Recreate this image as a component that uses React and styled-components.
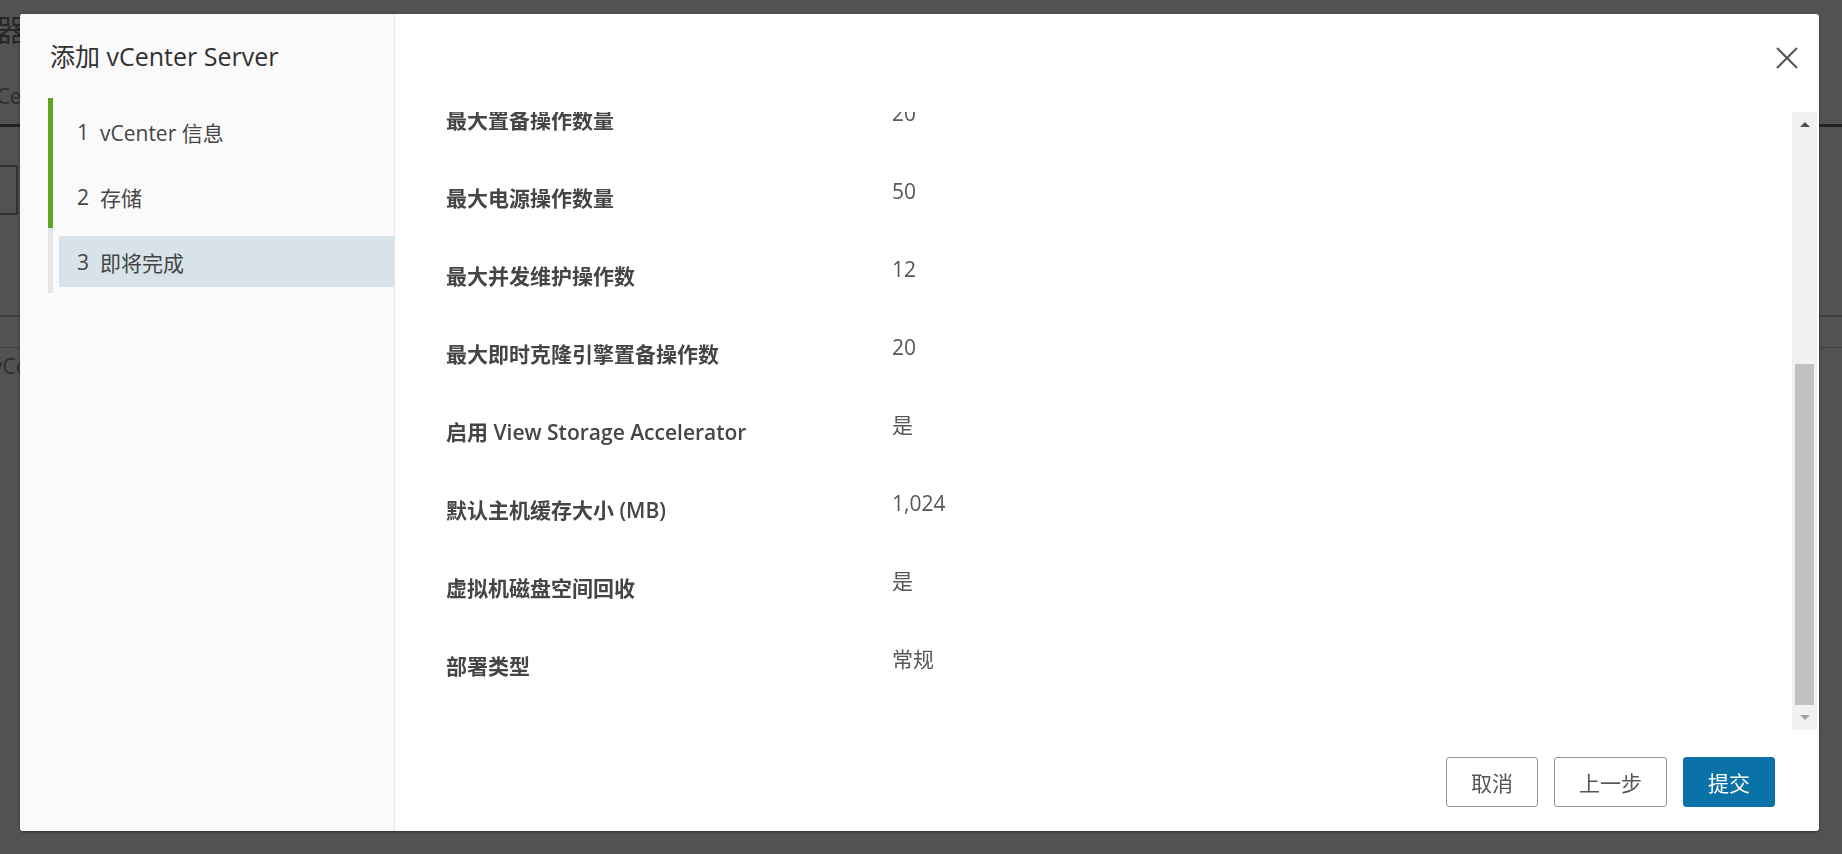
import React from 'react'
import styled, { createGlobalStyle } from 'styled-components'

const GlobalStyle = createGlobalStyle`
  html, body {
    margin: 0;
    height: 100%;
  }
  body {
    font-family: "Open Sans", "Noto Sans CJK SC", sans-serif;
    background: #ffffff;
    overflow: hidden;
  }
  #root {
    height: 100%;
  }
`

/* page underneath the dialog */
const Page = styled.div`
  height: 100vh;
  margin-left: -64px;
  padding-top: 12px;
  color: #8a8a8a;
`

const PageTitle = styled.h1`
  margin: 0;
  font-size: 30px;
  font-weight: 400;
  line-height: 36px;
  color: #7a7a7a;
`

const Tabs = styled.div`
  display: flex;
  align-items: flex-end;
  height: 76px;
  border-bottom: 3px solid #6a6a6a;
  font-size: 21px;
`

const Tab = styled.div`
  padding: 0 0 14px 50px;
`

const Toolbar = styled.div`
  display: flex;
  margin-top: 38px;
  height: 50px;
`

const ToolButton = styled.div`
  width: 78px;
  border: 2px solid #9a9a9a;
`

const TableHead = styled.div`
  margin-top: 100px;
  border-top: 2px solid #c8c8c8;
  height: 30px;
  border-bottom: 1px solid #c8c8c8;
`

const TableRow = styled.div`
  padding: 4px 0 0 56px;
  font-size: 21px;
`

/* modal */
const Backdrop = styled.div`
  position: fixed;
  inset: 0;
  display: flex;
  padding: 14px 23px 23px 20px;
  background: rgba(0, 0, 0, 0.68);
`

const Modal = styled.div`
  flex: 1;
  display: flex;
  background: #ffffff;
  border-radius: 3px;
  box-shadow: 0 1px 3px rgba(0, 0, 0, 0.45);
  overflow: hidden;
`

const Sidebar = styled.aside`
  width: 375px;
  box-sizing: border-box;
  padding-top: 24px;
  background: #fafafa;
  border-right: 1px solid #e4e4e4;
`

const Title = styled.h2`
  margin: 0 0 24px 30px;
  font-size: 25px;
  font-weight: 400;
  line-height: 36px;
  color: #313131;
`

const StepList = styled.ol`
  list-style: none;
  margin: 0 0 0 28px;
  padding: 0;
`

const Step = styled.li`
  height: 65px;
  box-sizing: border-box;
  padding: 8px 0 6px 6px;
  border-left: 5px solid ${p => (p.done ? '#5fa722' : '#e6e6e6')};
`

const StepLink = styled.div`
  display: flex;
  align-items: center;
  height: 100%;
  padding-left: 18px;
  font-size: 21px;
  color: #454545;
  background: ${p => (p.current ? '#d8e3e9' : 'transparent')};
`

const StepNo = styled.span`
  width: 12px;
  margin-right: 11px;
`

const Main = styled.section`
  flex: 1;
  display: flex;
  flex-direction: column;
`

const Header = styled.header`
  height: 98px;
  box-sizing: border-box;
  display: flex;
  justify-content: flex-end;
  padding: 33px 21px 0 0;
`

const CloseButton = styled.button`
  width: 22px;
  height: 22px;
  padding: 0;
  border: 0;
  background: none;
  color: #555555;
  cursor: pointer;
`

const Body = styled.div`
  height: 618px;
  display: flex;
`

const Viewport = styled.div`
  flex: 1;
  display: flex;
  flex-direction: column;
  justify-content: flex-end;
  overflow: hidden;
  padding: 0 0 8px 51px;
`

const Row = styled.div`
  display: grid;
  grid-template-columns: 446px 1fr;
  height: 78px;
  font-size: 21px;
  line-height: 30px;
`

const Label = styled.div`
  padding-top: 7px;
  font-weight: 600;
  color: #454545;
`

const Value = styled.div`
  color: #575757;
`

const ScrollBar = styled.div`
  width: 25px;
  margin-right: 2px;
  display: flex;
  flex-direction: column;
  background: #f1f1f1;
`

const Arrow = styled.div`
  height: 25px;
  display: flex;
  align-items: center;
  justify-content: center;

  &::after {
    content: "";
    border-left: 5px solid transparent;
    border-right: 5px solid transparent;
    ${p => (p.down
      ? 'border-top: 5px solid #a3a3a3;'
      : 'border-bottom: 5px solid #505050;')}
  }
`

const Track = styled.div`
  flex: 1;
  display: flex;
  flex-direction: column;
  justify-content: flex-end;
  padding: 0 3px;
`

const Thumb = styled.div`
  height: 60%;
  background: #c1c1c1;
`

const Footer = styled.footer`
  flex: 1;
  display: flex;
  justify-content: flex-end;
  align-items: flex-start;
  gap: 16px;
  padding: 27px 44px 0 0;
`

const Button = styled.button`
  height: 50px;
  padding: 0 24px;
  border-radius: 3px;
  font-family: inherit;
  font-size: 21px;
  cursor: pointer;
  border: 1px solid ${p => (p.primary ? '#0b72a7' : '#959595')};
  background: ${p => (p.primary ? '#0b72a7' : '#ffffff')};
  color: ${p => (p.primary ? '#ffffff' : '#565656')};
`

const steps = [
  { no: 1, name: 'vCenter 信息', done: true },
  { no: 2, name: '存储', done: true },
  { no: 3, name: '即将完成', current: true },
]

const summary = [
  ['最大置备操作数量', '20'],
  ['最大电源操作数量', '50'],
  ['最大并发维护操作数', '12'],
  ['最大即时克隆引擎置备操作数', '20'],
  ['启用 View Storage Accelerator', '是'],
  ['默认主机缓存大小 (MB)', '1,024'],
  ['虚拟机磁盘空间回收', '是'],
  ['部署类型', '常规'],
]

function CloseIcon() {
  return (
    <svg width="22" height="22" viewBox="0 0 22 22">
      <path d="M1 1 L21 21 M21 1 L1 21" stroke="currentColor" strokeWidth="2" fill="none" />
    </svg>
  )
}

export default function App() {
  return (
    <>
      <GlobalStyle />
      <Page>
        <PageTitle>服务器</PageTitle>
        <Tabs>
          <Tab>vCenter Server</Tab>
        </Tabs>
        <Toolbar>
          <ToolButton />
        </Toolbar>
        <TableHead />
        <TableRow>vCenter</TableRow>
      </Page>

      <Backdrop>
        <Modal>
          <Sidebar>
            <Title>添加 vCenter Server</Title>
            <StepList>
              {steps.map(s => (
                <Step key={s.no} done={s.done}>
                  <StepLink current={s.current}>
                    <StepNo>{s.no}</StepNo>
                    {s.name}
                  </StepLink>
                </Step>
              ))}
            </StepList>
          </Sidebar>

          <Main>
            <Header>
              <CloseButton aria-label="关闭">
                <CloseIcon />
              </CloseButton>
            </Header>
            <Body>
              <Viewport>
                <div>
                  {summary.map(([label, value]) => (
                    <Row key={label}>
                      <Label>{label}</Label>
                      <Value>{value}</Value>
                    </Row>
                  ))}
                </div>
              </Viewport>
              <ScrollBar>
                <Arrow />
                <Track>
                  <Thumb />
                </Track>
                <Arrow down />
              </ScrollBar>
            </Body>
            <Footer>
              <Button>取消</Button>
              <Button>上一步</Button>
              <Button primary>提交</Button>
            </Footer>
          </Main>
        </Modal>
      </Backdrop>
    </>
  )
}
